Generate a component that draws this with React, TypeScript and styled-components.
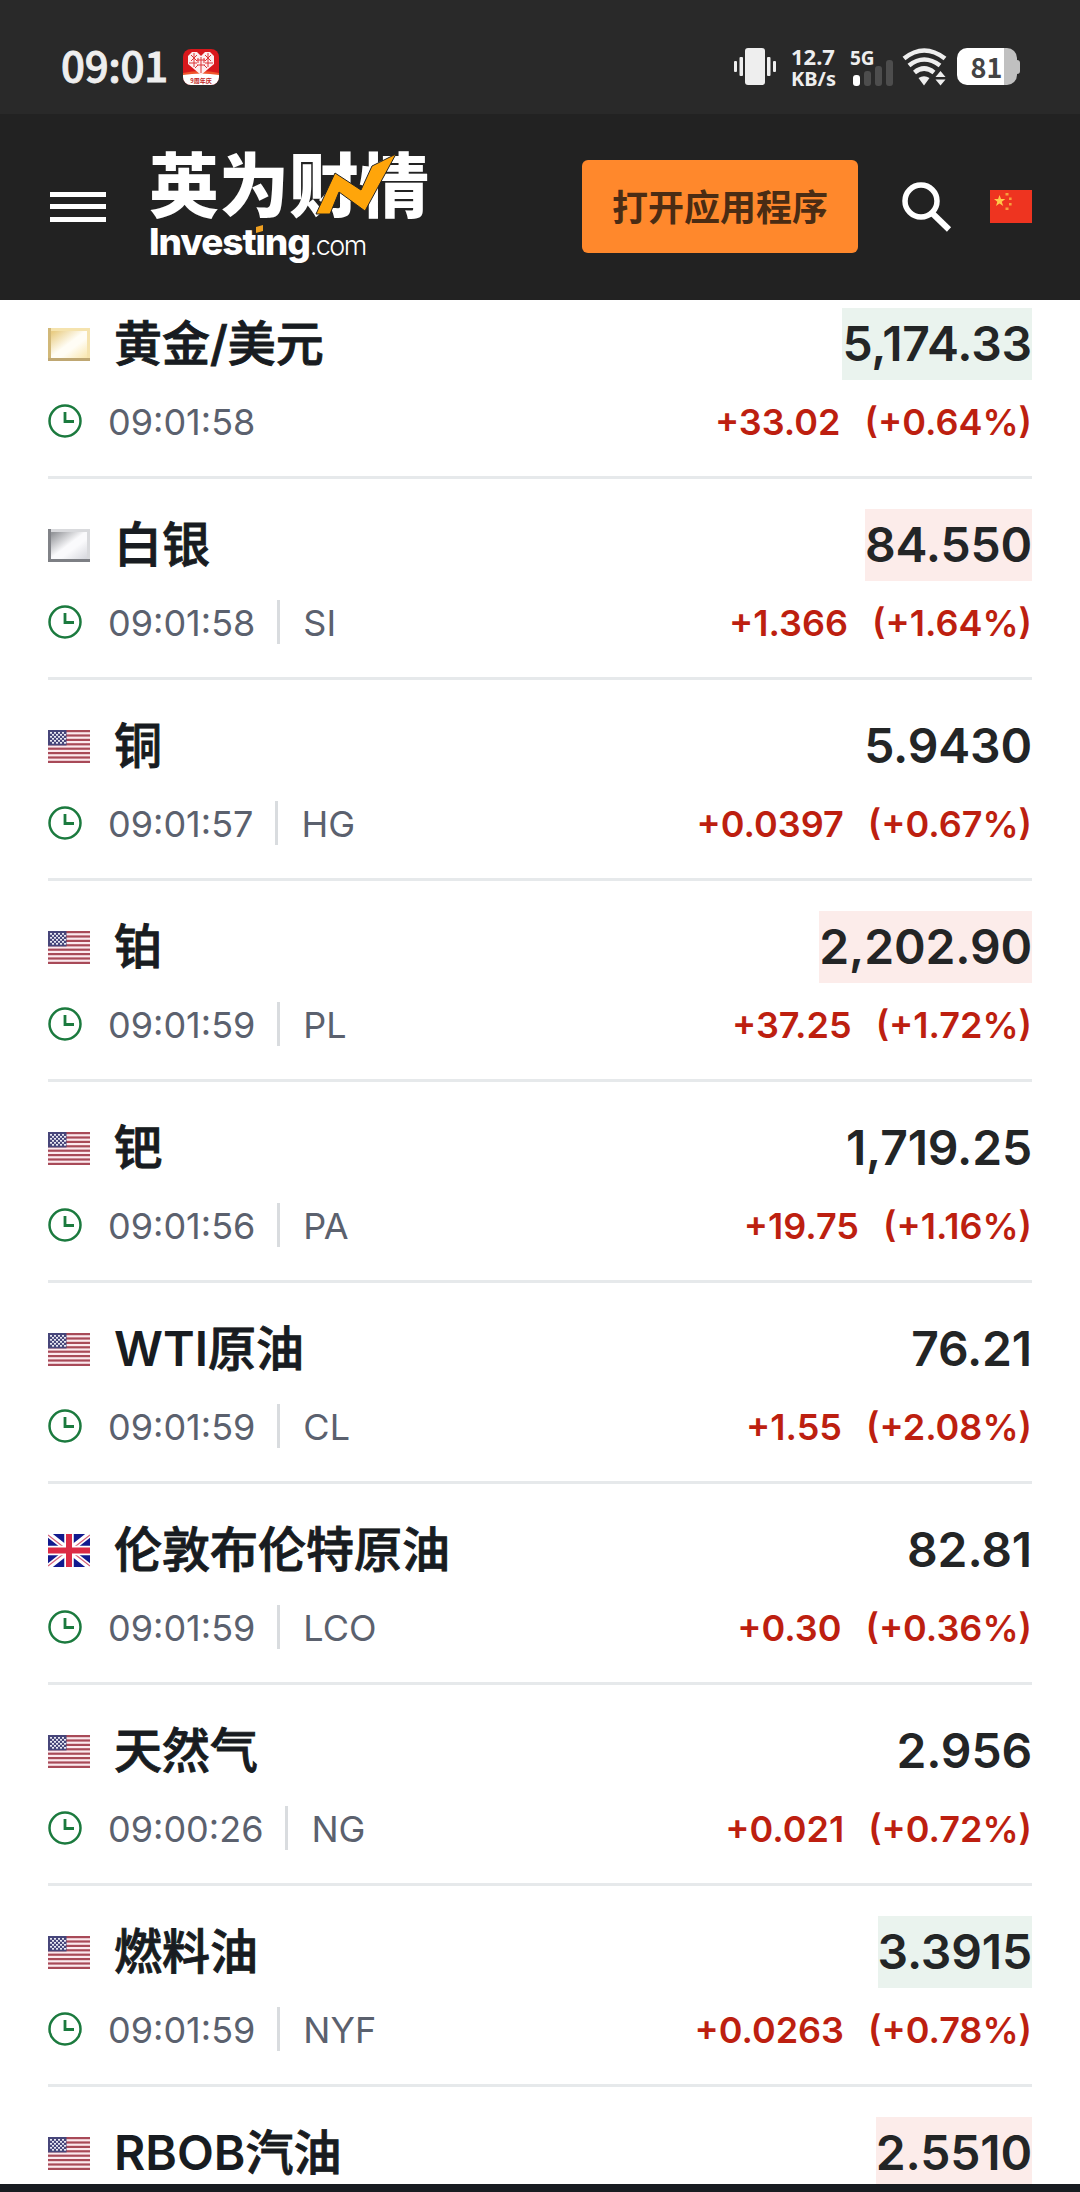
import React from "react";
import styled, { createGlobalStyle, css } from "styled-components";

const Global = createGlobalStyle`
  *, *::before, *::after { box-sizing: border-box; }
  body { margin: 0; background: #fff; }
`;

const Screen = styled.div`
  width: 1080px;
  height: 2192px;
  overflow: hidden;
  display: flex;
  flex-direction: column;
  background: #fff;
  font-family: Inter, "Noto Sans CJK SC", sans-serif;
`;

const StatusBar = styled.div`
  height: 114px;
  flex: none;
  padding: 19px 60px 0 61px;
  display: flex;
  align-items: center;
  background: #292929;
  color: #eee;
`;
const Clock = styled.span`
  font: 500 42px/48px "Noto Sans CJK SC", sans-serif;
  -webkit-text-stroke: 0.9px #eee;
  width: 104px;
  margin-bottom: 6px;
  letter-spacing: -0.3px;
  white-space: nowrap;
`;
const AppBadge = styled.svg`
  width: 36px;
  height: 36px;
  margin-left: 18px;
`;
const StatusRight = styled.div`
  margin-left: auto;
  display: flex;
  align-items: center;
`;
const Speed = styled.div`
  width: 44px;
  margin-left: 15px;
  display: flex;
  flex-direction: column;
  white-space: nowrap;
`;
const SpeedValue = styled.span`
  font: 700 22px/23px "Noto Sans", sans-serif;
`;
const SpeedUnit = styled.span`
  font: 700 20px/21px "Noto Sans", sans-serif;
`;
const Signal = styled.div`
  width: 44px;
  height: 40px;
  margin-left: 15px;
  display: grid;
  grid-template: 40px / 44px;
  > * { grid-area: 1 / 1; }
`;
const Network = styled.span`
  font: 700 19px/18px "Noto Sans", sans-serif;
  padding-top: 2px;
`;
const Wifi = styled.svg`
  width: 46px;
  height: 38px;
  margin-left: 8px;
`;
const Battery = styled.div`
  width: 60px;
  height: 37px;
  margin-left: 9px;
  padding-right: 1px;
  border-radius: 10px;
  display: flex;
  align-items: center;
  justify-content: center;
  background: linear-gradient(90deg, #fff 47px, #c0c0c0 47px);
  color: #444;
  font: 700 27px/35px "Noto Sans CJK SC", sans-serif;
`;
const BatteryTip = styled.span`
  width: 3px;
  height: 14px;
  border-radius: 0 3px 3px 0;
  background: #c0c0c0;
`;

const Header = styled.header`
  height: 186px;
  flex: none;
  padding: 0 48px 1px 50px;
  display: flex;
  align-items: center;
  background: #222;
`;
const Burger = styled.div`
  width: 56px;
  height: 30px;
  display: flex;
  flex-direction: column;
  justify-content: space-between;
`;
const BurgerLine = styled.i`
  height: 5px;
  background: #fff;
`;
const Logo = styled.div`
  position: relative;
  width: 284px;
  height: 120px;
  margin-left: 43px;
  color: #fff;
`;
const LogoCn = styled.div`
  font: 900 70px/70px "Noto Sans CJK SC", sans-serif;
  height: 75px;
  white-space: nowrap;
`;
const LogoEn = styled.div`
  display: flex;
  align-items: baseline;
  white-space: nowrap;
`;
const LogoBold = styled.span`
  font: 800 37px/40px Inter, sans-serif;
  letter-spacing: -1.1px;
`;
const LogoLight = styled.span`
  font: 300 27px/40px Inter, sans-serif;
  letter-spacing: -1.6px;
`;
const LogoMark = styled.svg`
  position: absolute;
  left: 0;
  top: 0;
`;
const OpenApp = styled.button`
  width: 276px;
  height: 93px;
  margin-left: auto;
  padding: 0 0 3px;
  border: 0;
  border-radius: 6px;
  background: #ff882c;
  color: #4a2c14;
  font: 700 36px/90px "Noto Sans CJK SC", sans-serif;
`;
const SearchIcon = styled.svg`
  width: 50px;
  height: 50px;
  margin-left: 44px;
`;
const HeaderFlag = styled.svg`
  width: 42px;
  height: 33px;
  margin-left: 38px;
`;

const List = styled.main`
  flex: 1;
  min-height: 0;
  overflow: hidden;
  padding: 0 48px;
`;
const Rows = styled.div`
  margin-top: -22px;
`;
const Row = styled.div`
  height: 201px;
  padding-top: 30px;
  border-bottom: 3px solid #e6e9eb;
`;
const Line = styled.div`
  display: flex;
  align-items: center;
  justify-content: space-between;
`;
const Top = styled(Line)`
  height: 72px;
`;
const Bottom = styled(Line)`
  height: 48px;
  margin-top: 18px;
`;
const Group = styled.div`
  display: flex;
  align-items: center;
`;
const Flag = styled.svg`
  width: 42px;
  height: 33px;
  flex: none;
  margin-right: 24px;
`;
const Name = styled.span`
  height: 72px;
  color: #181c21;
  font: 500 48px/71px Inter, "Noto Sans CJK SC", sans-serif;
  -webkit-text-stroke: 0.9px #181c21;
  white-space: nowrap;
`;
const NameLatin = styled.span`
  font-weight: 600;
  -webkit-text-stroke: 0;
`;
const Price = styled.span<{ $flash?: "up" | "down" }>`
  height: 72px;
  color: #232526;
  font: 600 48px/71px Inter, sans-serif;
  letter-spacing: -0.15px;
  ${(p) => p.$flash === "up" && css`background: #eaf3ee;`}
  ${(p) => p.$flash === "down" && css`background: #fcecea;`}
`;
const ClockIcon = styled.svg`
  width: 34px;
  height: 34px;
  margin: 0 26px 2px 0;
`;
const Meta = styled.span`
  color: #5b616e;
  font: 400 36px/48px Inter, sans-serif;
`;
const Divider = styled.i`
  width: 3px;
  height: 44px;
  margin: 0 23px 2px 22px;
  background: #d9dcdf;
`;
const Change = styled.span`
  color: #bd1f10;
  font: 600 36px/48px Inter, sans-serif;
  margin-left: 24px;
`;
const BottomBar = styled.footer`
  height: 8px;
  flex: none;
  background: #181c21;
`;

type FlagKind = "gold" | "silver" | "us" | "gb";

const UsFlag = () => (
  <Flag viewBox="0 0 42 33">
    <rect width="42" height="33" fill="#fbe9ee" />
    {[0, 1, 2, 3, 4, 5, 6, 7].map((i) => (
      <rect key={i} y={i * 4.4} width="42" height="2.2" fill="#a84a58" />
    ))}
    <rect width="18.5" height="15.4" fill="#47467a" />
    {[0, 1, 2, 3, 4, 5].map((r) =>
      [0, 1, 2, 3].map((c) => (
        <rect key={`${r}-${c}`} x={2 + c * 4 + (r % 2) * 2} y={2 + r * 2} width="2" height="1.7" fill="#e8e8f2" />
      ))
    )}
  </Flag>
);

const GbFlag = () => (
  <Flag viewBox="0 0 42 33">
    <rect width="42" height="33" fill="#121a8e" />
    <path d="M0 0L42 33M42 0L0 33" stroke="#fff" strokeWidth="6" />
    <path d="M0 1L18 15M42 1L24 15M0 32L18 18M42 32L24 18" stroke="#d5617a" strokeWidth="1.2" />
    <path d="M21 0V33M0 16.5H42" stroke="#fff" strokeWidth="9.500" />
    <path d="M21 0V33M0 16.5H42" stroke="#dc2a44" strokeWidth="6" />
  </Flag>
);

const MetalFlag = ({ kind }: { kind: "gold" | "silver" }) => {
  const c =
    kind === "gold"
      ? { top: "#f5e3ae", side: "#d1b878", base: "#bfa772", a: "#e9cd85", b: "#fffdf5", d: "#f9e6ae" }
      : { top: "#d9dadd", side: "#808287", base: "#7d7f84", a: "#95979b", b: "#fafafc", d: "#d6d7dd" };
  return (
    <Flag viewBox="0 0 42 33">
      <defs>
        <linearGradient id={kind} x1="0" y1="0" x2="1" y2="1">
          <stop offset="0.05" stopColor={c.a} />
          <stop offset="0.48" stopColor={c.b} />
          <stop offset="0.62" stopColor={c.b} />
          <stop offset="1" stopColor={c.d} />
        </linearGradient>
      </defs>
      <rect width="42" height="33" fill={c.top} />
      <rect width="3" height="33" fill={c.side} />
      <rect y="30" width="42" height="3" fill={c.base} />
      <rect x="3" y="3" width="36" height="27" fill={`url(#${kind})`} />
    </Flag>
  );
};

const RowFlag = ({ kind }: { kind: FlagKind }) =>
  kind === "us" ? <UsFlag /> : kind === "gb" ? <GbFlag /> : <MetalFlag kind={kind} />;

type Quote = {
  flag: FlagKind;
  latin?: string;
  name: string;
  price: string;
  time: string;
  code?: string;
  change: string;
  pct: string;
  flash?: "up" | "down";
};

const quotes: Quote[] = [
  { flag: "gold", name: "黄金/美元", price: "5,174.33", time: "09:01:58", change: "+33.02", pct: "(+0.64%)", flash: "up" },
  { flag: "silver", name: "白银", price: "84.550", time: "09:01:58", code: "SI", change: "+1.366", pct: "(+1.64%)", flash: "down" },
  { flag: "us", name: "铜", price: "5.9430", time: "09:01:57", code: "HG", change: "+0.0397", pct: "(+0.67%)" },
  { flag: "us", name: "铂", price: "2,202.90", time: "09:01:59", code: "PL", change: "+37.25", pct: "(+1.72%)", flash: "down" },
  { flag: "us", name: "钯", price: "1,719.25", time: "09:01:56", code: "PA", change: "+19.75", pct: "(+1.16%)" },
  { flag: "us", latin: "WTI", name: "原油", price: "76.21", time: "09:01:59", code: "CL", change: "+1.55", pct: "(+2.08%)" },
  { flag: "gb", name: "伦敦布伦特原油", price: "82.81", time: "09:01:59", code: "LCO", change: "+0.30", pct: "(+0.36%)" },
  { flag: "us", name: "天然气", price: "2.956", time: "09:00:26", code: "NG", change: "+0.021", pct: "(+0.72%)" },
  { flag: "us", name: "燃料油", price: "3.3915", time: "09:01:59", code: "NYF", change: "+0.0263", pct: "(+0.78%)", flash: "up" },
];

const lastQuote = { latin: "RBOB", name: "汽油", price: "2.5510" };

export default function App() {
  return (
    <Screen>
      <Global />
      <StatusBar>
        <Clock>09:01</Clock>
        <AppBadge viewBox="0 0 36 36">
          <rect width="36" height="36" rx="8" fill="#d8181c" />
          <path d="M0 25Q18 22 36 25V28A8 8 0 0 1 28 36H8A8 8 0 0 1 0 28Z" fill="#fff" />
          <path d="M0 24Q18 20 36 24V26Q18 23 0 26Z" fill="#f0542c" />
          <path d="M18 26L5 15V7L9 3H14L18 7L22 3H27L31 7V15Z" fill="#fdeeee" />
          <path
            d="M8 6L14 12M8 12L14 6M22 12L28 6M22 6L28 12M11 4V18M25 4V18M6 14H14M22 14H30M18 8V24M14 11H22M14 16H22M12 19L15 16M24 19L21 16M15 9V14M21 9V14"
            stroke="#dc3436"
            strokeWidth="1"
          />
          <text x="18" y="33.500" textAnchor="middle" fontFamily="Noto Sans CJK SC, sans-serif" fontWeight="700" fontSize="6" fill="#c01c1c">
            9周年庆
          </text>
        </AppBadge>
        <StatusRight>
          <svg width="42" height="37" viewBox="0 0 42 37" fill="#eee">
            <rect x="11" width="20" height="37" rx="3" />
            <rect x="5.5" y="9" width="3.500" height="19" rx="1" />
            <rect x="33" y="9" width="3.500" height="19" rx="1" />
            <rect y="13" width="3" height="11" rx="1" />
            <rect x="39" y="13" width="3" height="11" rx="1" />
          </svg>
          <Speed>
            <SpeedValue>12.7</SpeedValue>
            <SpeedUnit>KB/s</SpeedUnit>
          </Speed>
          <Signal>
            <svg width="44" height="40" viewBox="0 0 44 40">
              <rect x="3" y="28" width="7" height="11" rx="3" fill="#fff" />
              <rect x="14" y="24" width="7" height="15" rx="3" fill="#4d4d4d" />
              <rect x="25" y="19" width="7" height="20" rx="3" fill="#4d4d4d" />
              <rect x="36" y="13" width="7" height="26" rx="3" fill="#4d4d4d" />
            </svg>
            <Network>5G</Network>
          </Signal>
          <Wifi viewBox="0 0 46 38">
            <g fill="none" stroke="#eee" strokeWidth="4.600">
              <path d="M2 10.500Q22 -5.500 43 10.500" />
              <path d="M7 17.500Q22 5.500 38 17.500" />
              <path d="M12.500 24.500Q22 16.500 32 24.500" />
            </g>
            <path d="M16.500 30Q22 26.500 27.500 30L22 37.500ZM33.500 29L38.500 23L43.500 29ZM33.500 31.500H43.500L38.500 37.500Z" fill="#eee" />
          </Wifi>
          <Battery>81</Battery>
          <BatteryTip />
        </StatusRight>
      </StatusBar>
      <Header>
        <Burger>
          <BurgerLine />
          <BurgerLine />
          <BurgerLine />
        </Burger>
        <Logo>
          <LogoCn>英为财情</LogoCn>
          <LogoEn>
            <LogoBold>Investing</LogoBold>
            <LogoLight>.com</LogoLight>
          </LogoEn>
          <LogoMark width="280" height="120" viewBox="0 0 280 120">
            <path d="M167 67L186 26L212 43L223 19L247 7L216 64L190 45L181 67Z" fill="#ffa50a" stroke="#222" strokeWidth="1" />
            <path d="M105 75H116V87H105Z" fill="#222" />
            <path d="M107 80L114 78V84L107 86Z" fill="#f0a020" />
          </LogoMark>
        </Logo>
        <OpenApp>打开应用程序</OpenApp>
        <SearchIcon viewBox="0 0 50 50" fill="none" stroke="#fff">
          <circle cx="19" cy="19" r="16" strokeWidth="5.500" />
          <path d="M30 31L47 47.500" strokeWidth="6" />
        </SearchIcon>
        <HeaderFlag viewBox="0 0 42 33">
          <rect width="42" height="33" fill="#ee3420" />
          <path d="M9.500 5l1.500 4h4.300l-3.500 2.700 1.400 4.300-3.700-2.600L6 16l1.300-4.300L4 9h4.100z" fill="#ffc94a" />
          <path d="M15.500 3h3v2.500h-3zM19 7.500h2.600v2.500H19zM19 13h2.600v2.500H19zM15.500 17.500h3v2.500h-3z" fill="#f6a03c" />
        </HeaderFlag>
      </Header>
      <List>
        <Rows>
          {quotes.map((q) => (
            <Row key={q.name}>
              <Top>
                <Group>
                  <RowFlag kind={q.flag} />
                  <Name>
                    {q.latin && <NameLatin>{q.latin}</NameLatin>}
                    {q.name}
                  </Name>
                </Group>
                <Price $flash={q.flash}>{q.price}</Price>
              </Top>
              <Bottom>
                <Group>
                  <ClockIcon viewBox="0 0 34 34" fill="none" stroke="#1b7a3e">
                    <circle cx="17" cy="17" r="15.500" strokeWidth="2.500" />
                    <path d="M17 8V17.500H26" strokeWidth="2.800" />
                  </ClockIcon>
                  <Meta>{q.time}</Meta>
                  {q.code && <Divider />}
                  {q.code && <Meta>{q.code}</Meta>}
                </Group>
                <Group>
                  <Change>{q.change}</Change>
                  <Change>{q.pct}</Change>
                </Group>
              </Bottom>
            </Row>
          ))}
          <Row>
            <Top>
              <Group>
                <RowFlag kind="us" />
                <Name>
                  <NameLatin>{lastQuote.latin}</NameLatin>
                  {lastQuote.name}
                </Name>
              </Group>
              <Price $flash="down">{lastQuote.price}</Price>
            </Top>
          </Row>
        </Rows>
      </List>
      <BottomBar />
    </Screen>
  );
}
